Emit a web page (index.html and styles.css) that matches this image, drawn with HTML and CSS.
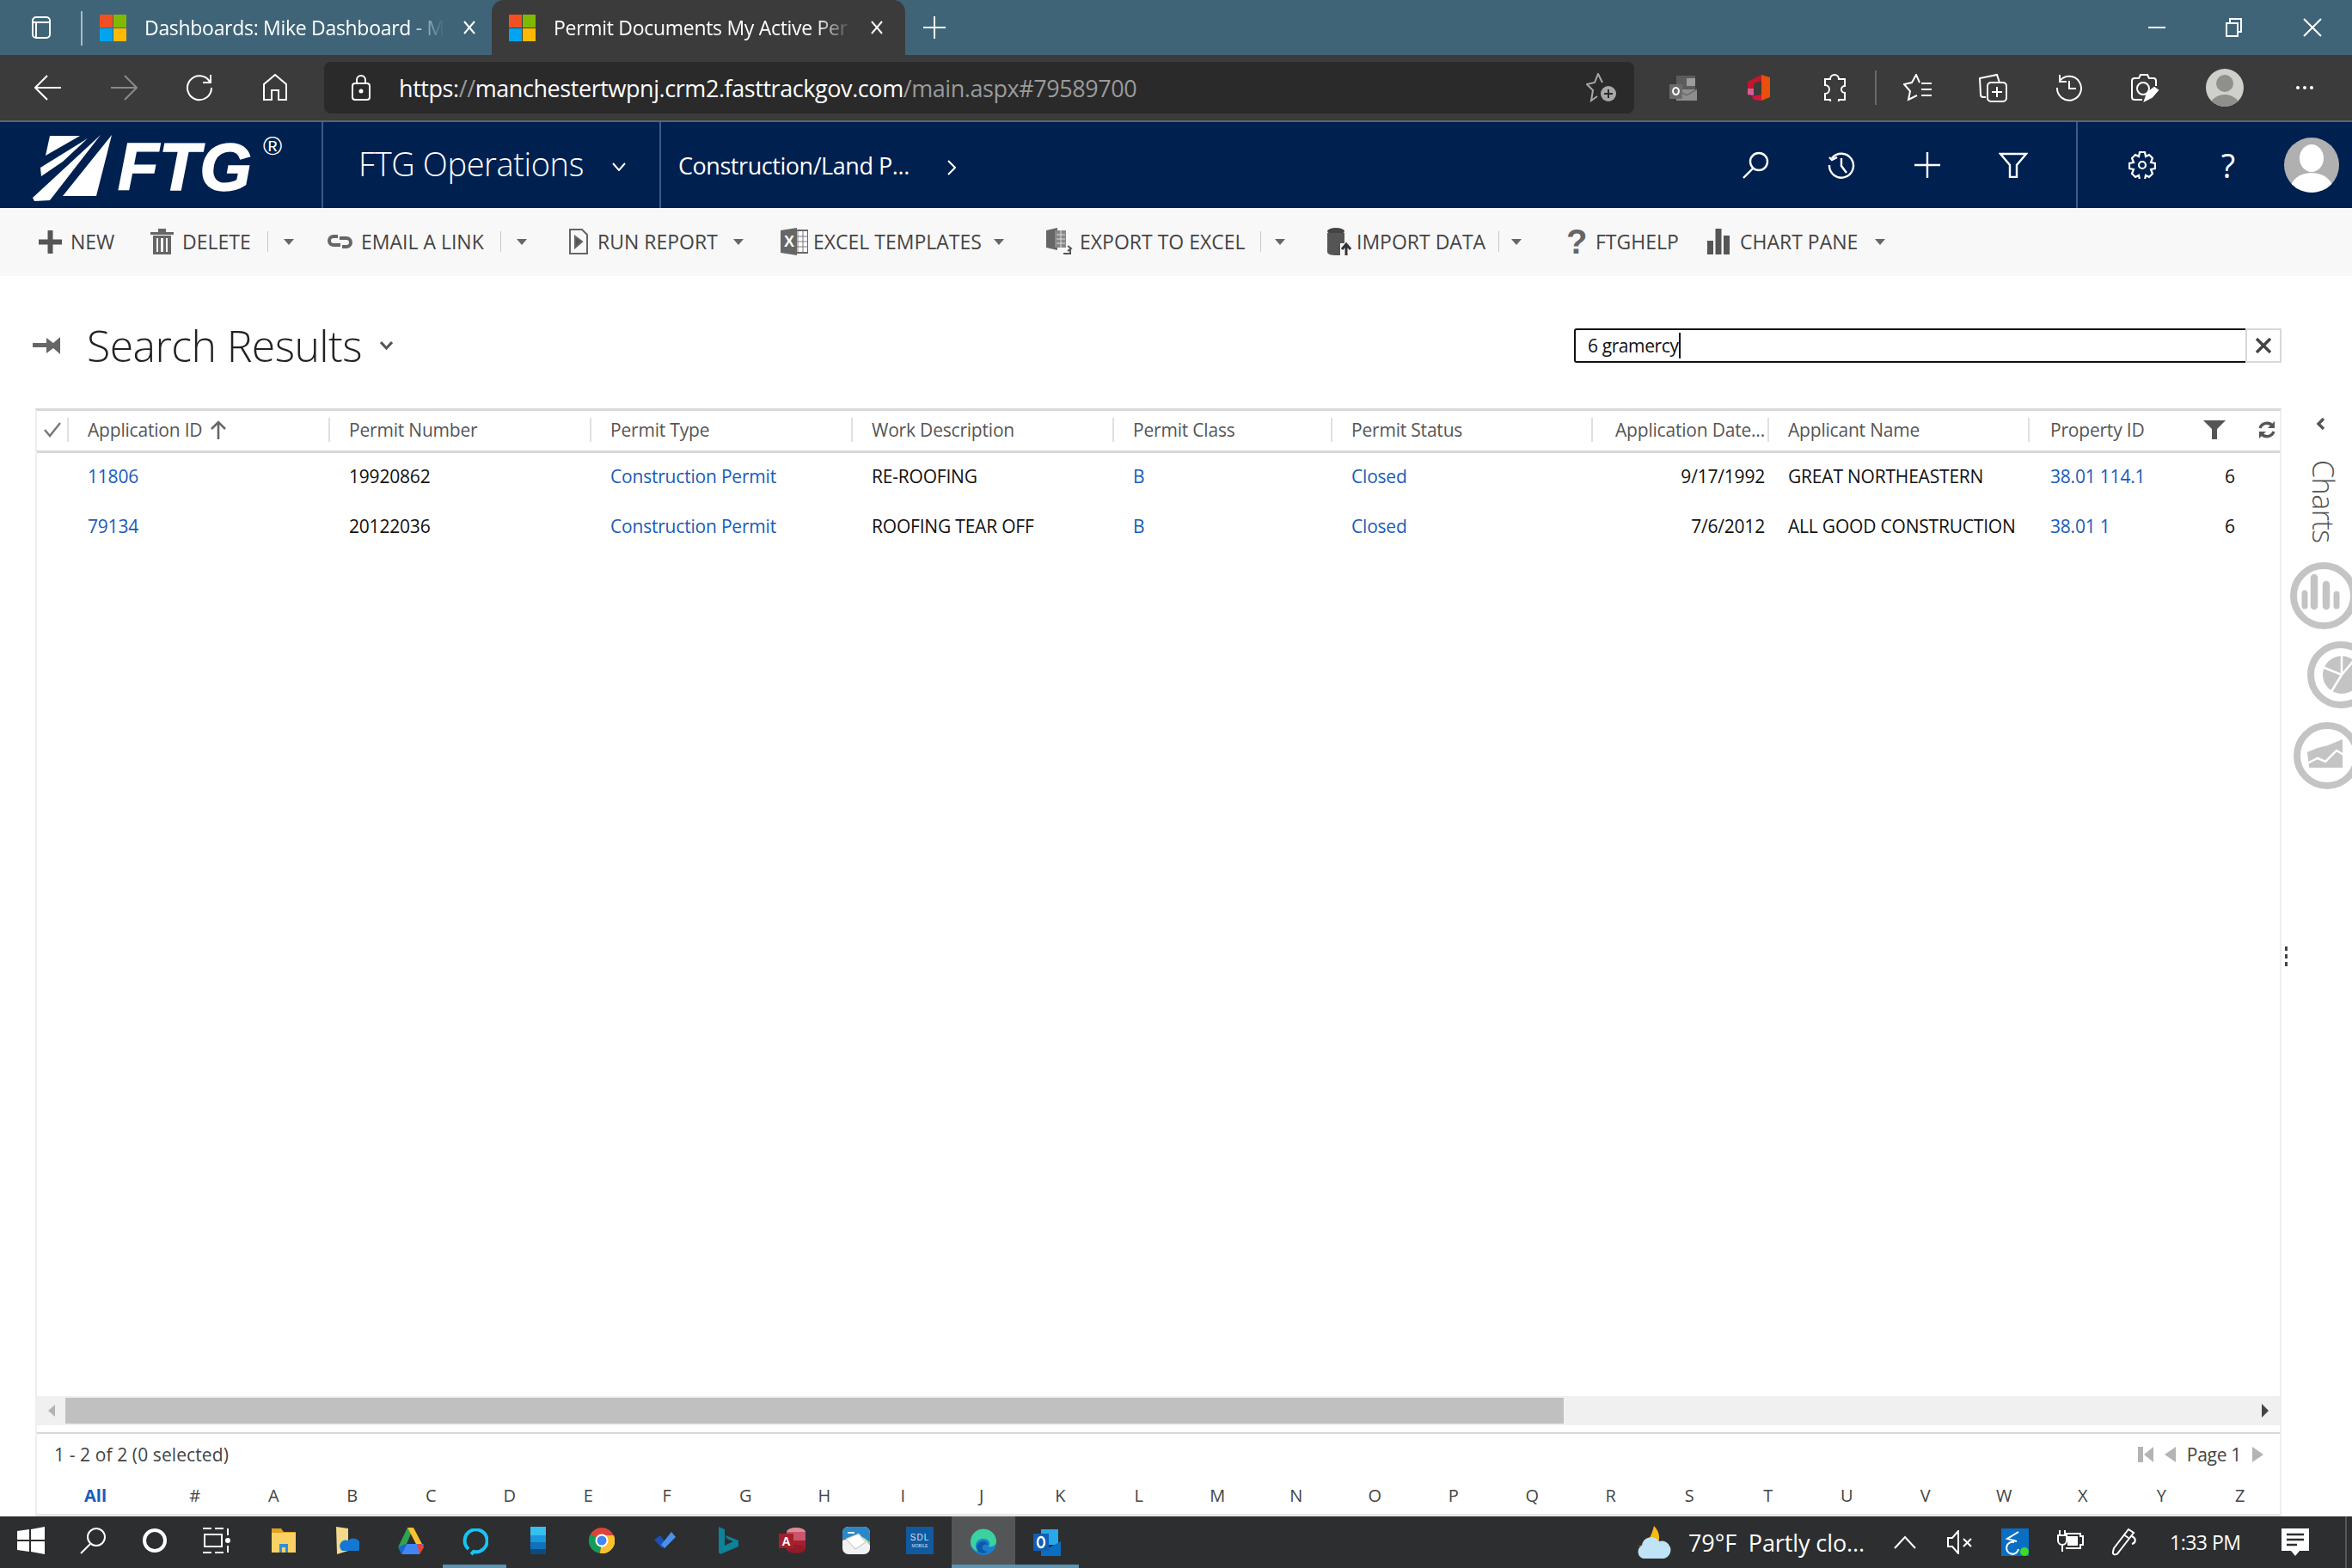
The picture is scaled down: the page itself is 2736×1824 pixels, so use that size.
FILE: index.html
```html
<!DOCTYPE html>
<html>
<head>
<meta charset="UTF-8">
<title>Permit Documents My Active Permits</title>
<link rel="stylesheet" href="styles.css">
</head>
<body>
<div class="screen">

<!-- browser tabs -->
<div class="tabbar">
  <div class="tabside"><svg width="24" height="28" viewBox="0 0 24 28" fill="none" stroke="#fff" stroke-width="2"><rect x="2" y="2" width="20" height="24" rx="4"/><path d="M2 8h20M6 8v18" /></svg></div>
  <div class="tabsep"></div>
  <div class="tab tab1">
    <svg class="favicon" width="31" height="31" viewBox="0 0 31 31"><rect width="15" height="15" fill="#f25022"/><rect x="16" width="15" height="15" fill="#7fba00"/><rect y="16" width="15" height="15" fill="#00a4ef"/><rect x="16" y="16" width="15" height="15" fill="#ffb900"/></svg>
    <span class="tabtitle">Dashboards: Mike Dashboard - M</span>
    <svg class="tabx" width="16" height="16" viewBox="0 0 16 16" stroke="#fff" stroke-width="2"><path d="M2 1l12 14M14 1L2 15"/></svg>
  </div>
  <div class="tab tab2">
    <svg class="favicon" width="31" height="31" viewBox="0 0 31 31"><rect width="15" height="15" fill="#f25022"/><rect x="16" width="15" height="15" fill="#7fba00"/><rect y="16" width="15" height="15" fill="#00a4ef"/><rect x="16" y="16" width="15" height="15" fill="#ffb900"/></svg>
    <span class="tabtitle">Permit Documents My Active Per</span>
    <svg class="tabx" width="16" height="16" viewBox="0 0 16 16" stroke="#fff" stroke-width="2"><path d="M2 1l12 14M14 1L2 15"/></svg>
  </div>
  <svg class="tabplus" width="26" height="26" viewBox="0 0 26 26" stroke="#fff" stroke-width="2"><path d="M13 0v26M0 13h26"/></svg>
  <div class="winbtns">
    <svg width="20" height="20" viewBox="0 0 20 20" stroke="#fff" stroke-width="2"><path d="M0 10h20"/></svg>
    <svg width="20" height="22" viewBox="0 0 20 22" fill="none" stroke="#fff" stroke-width="2"><rect x="1" y="6" width="13" height="15"/><path d="M5 6V1h13v15h-4"/></svg>
    <svg width="22" height="22" viewBox="0 0 22 22" stroke="#fff" stroke-width="2"><path d="M1 1l20 20M21 1L1 21"/></svg>
  </div>
</div>

<!-- browser toolbar -->
<div class="toolbar">
  <div class="tool"><svg width="32" height="30" viewBox="0 0 32 30" fill="none" stroke="#fff" stroke-width="2"><path d="M31 15H2M15 1L1 15l14 14"/></svg></div>
  <div class="tool"><svg width="32" height="30" viewBox="0 0 32 30" fill="none" stroke="#8a8a8a" stroke-width="2"><path d="M1 15h29M17 1l14 14-14 14"/></svg></div>
  <div class="tool"><svg width="32" height="32" viewBox="0 0 32 32" fill="none" stroke="#fff" stroke-width="2"><path d="M28 9a14 14 0 1 0 2 7M29 1v9h-9"/></svg></div>
  <div class="tool"><svg width="30" height="32" viewBox="0 0 30 32" fill="none" stroke="#fff" stroke-width="2"><path d="M2 30V12L15 1l13 11v18h-9V19h-8v11z"/></svg></div>
  <div class="addr">
    <svg class="lock" width="24" height="30" viewBox="0 0 24 30" fill="none" stroke="#fff" stroke-width="2"><rect x="2" y="10" width="20" height="19" rx="3"/><path d="M7 10V6a5 5 0 0 1 10 0v4"/><circle cx="12" cy="19" r="1.5" fill="#fff"/></svg>
    <span class="url"><span class="url-dim">https:</span><span class="url-dim">//</span><span class="url-host">manchestertwpnj.crm2.fasttrackgov.com</span><span class="url-dim">/main.aspx#79589700</span></span>
    <svg class="staradd" width="36" height="34" viewBox="0 0 36 34"><path d="M19 11L14 1l-4 10-9 2 7 7-2 12 7-5" fill="none" stroke="#a8a8a8" stroke-width="2"/><circle cx="26" cy="24" r="9" fill="#a8a8a8"/><path d="M26 19v10M21 24h10" stroke="#2a2a2a" stroke-width="2"/></svg>
  </div>
  <div class="tool tool-first"><svg width="32" height="29" viewBox="0 0 32 29"><rect x="8" y="0" width="22" height="16" fill="#5c5c5c"/><rect x="20" y="3" width="10" height="9" fill="#9c9c9c"/><path d="M8 16h24v13H8z" fill="#8e8e8e"/><path d="M8 16l12 7 12-7" fill="none" stroke="#6a6a6a" stroke-width="1.500"/><rect x="0" y="10" width="15" height="17" rx="1" fill="#6b6b6b"/><ellipse cx="7.500" cy="18" rx="3.400" ry="4" fill="none" stroke="#fff" stroke-width="2"/></svg></div>
  <div class="tool"><svg width="26" height="30" viewBox="0 0 26 30"><path d="M16 0L26 3V26L16 30z" fill="#e8500b"/><path d="M16 0V7L7 10V24L0 23V8z" fill="#c4162a"/><path d="M0 16H7V24L0 23z" fill="#d85a9a"/><path d="M5 25L16 23V30L7 29z" fill="#d9143f"/></svg></div>
  <div class="tool"><svg width="30" height="32" viewBox="0 0 30 32" fill="none" stroke="#fff" stroke-width="2"><path d="M10 6a5 5 0 0 1 10 0h7v8a4 4 0 0 0 0 8v8h-7a5 5 0 0 1-10 0H4v-7a4 4 0 0 0 0-10V6z"/></svg></div>
  <div class="toolsep"></div>
  <div class="tool"><svg width="34" height="32" viewBox="0 0 34 32" fill="none" stroke="#fff" stroke-width="2"><path d="M19 10L15 1l-5 9-9 2 7 8-2 10 10-5M21 11h12M21 18h12M21 25h12"/></svg></div>
  <div class="tool"><svg width="34" height="34" viewBox="0 0 34 34" fill="none" stroke="#fff" stroke-width="2"><path d="M8 28H5a3 3 0 0 1-3-3L1 6l20-4 3 9"/><rect x="10" y="11" width="22" height="22" rx="4"/><path d="M21 16v12M15 22h12"/></svg></div>
  <div class="tool"><svg width="32" height="32" viewBox="0 0 32 32" fill="none" stroke="#fff" stroke-width="2"><path d="M5 8a14 14 0 1 1-3 8M5 1v8h8M16 8v9h8"/></svg></div>
  <div class="tool"><svg width="34" height="34" viewBox="0 0 34 34" fill="none" stroke="#fff" stroke-width="2"><path d="M14 31H5a3 3 0 0 1-3-3V9a3 3 0 0 1 3-3h5l2-4h8l2 4h5a3 3 0 0 1 3 3v6"/><circle cx="15" cy="18" r="7"/><path d="M17 32l3-9 8-6 4 3-7 8z" fill="#fff"/></svg></div>
  <div class="tool tool-me"><div class="me"><div class="me-head"></div><div class="me-body"></div></div></div>
  <div class="tool tool-dots"><span class="dots"><i></i><i></i><i></i></span></div>
</div>

<!-- application header -->
<div class="appbar">
  <div class="logo">
    <svg width="96" height="80" viewBox="0 0 96 80" fill="#fff"><path d="M21 3h35L16 26z"/><path d="M65 6L10 40l1 10 25-17z"/><path d="M80 2L1 75l2 4 18-1z"/><path d="M93 2L75 73H36z"/></svg>
    <span class="logotext">FTG</span><span class="logoreg">®</span>
  </div>
  <div class="appname">FTG Operations<svg width="16" height="10" viewBox="0 0 16 10" fill="none" stroke="#fff" stroke-width="2"><path d="M1 1l7 8 7-8"/></svg></div>
  <div class="crumb">Construction/Land P...<svg width="10" height="18" viewBox="0 0 10 18" fill="none" stroke="#fff" stroke-width="2"><path d="M1 1l8 8-8 8"/></svg></div>
  <div class="navbtn"><svg width="32" height="32" viewBox="0 0 32 32" fill="none" stroke="#fff" stroke-width="2.400"><circle cx="20" cy="12" r="10"/><path d="M13 20L2 31"/></svg></div>
  <div class="navbtn"><svg width="32" height="32" viewBox="0 0 32 32" fill="none" stroke="#fff" stroke-width="2.400"><path d="M5 8a14 14 0 1 1-3 8M2 7l3 3 6-3M16 8v9l6 8"/></svg></div>
  <div class="navbtn"><svg width="32" height="32" viewBox="0 0 32 32" stroke="#fff" stroke-width="2.400"><path d="M16 1v30M1 16h30"/></svg></div>
  <div class="navbtn"><svg width="34" height="30" viewBox="0 0 34 30" fill="none" stroke="#fff" stroke-width="2.400"><path d="M2 2h30L21 15v14h-8V15z"/></svg></div>
  <div class="navgroup">
    <div class="navbtn"><svg width="32" height="32" viewBox="0 0 32 32" fill="none" stroke="#fff" stroke-width="2.200"><path d="M13 1h6l1 5 4-2 4 4-2 5 5 1v6l-5 1 2 5-4 4-4-2-1 5h-6l-1-5-4 2-4-4 2-5-5-1v-6l5-1-2-5 4-4 4 2z"/><circle cx="16" cy="16" r="4"/></svg></div>
    <div class="navbtn navhelp">?</div>
    <div class="navavatar"><div class="ava"><div class="ava-head"></div><div class="ava-body"></div></div></div>
  </div>
</div>

<!-- command bar -->
<div class="cmdbar">
  <div class="cmd cmd-new">
    <svg width="27" height="27" viewBox="0 0 27 27" stroke="#555" stroke-width="6"><path d="M13.500 0v27M0 13.500h27"/></svg>
    <span>NEW</span>
  </div>
  <div class="cmd cmd-delete">
    <svg width="27" height="30" viewBox="0 0 27 30" fill="#666"><rect x="0" y="4" width="27" height="3"/><rect x="9" y="0" width="9" height="4"/><path d="M3 8h21v22H3zM7 11v16h2V11zM12 11v16h3V11zM18 11v16h2V11z" fill-rule="evenodd"/></svg>
    <span>DELETE</span><i class="cmdsep"></i><b class="caret"></b>
  </div>
  <div class="cmd cmd-email">
    <svg width="29" height="18" viewBox="0 0 29 18" fill="none" stroke="#666" stroke-width="4"><path d="M12 3H7a5 5 0 0 0 0 10h8M17 15h5a5 5 0 0 0 0-10h-8"/></svg>
    <span>EMAIL A LINK</span><i class="cmdsep"></i><b class="caret"></b>
  </div>
  <div class="cmd cmd-run">
    <svg width="24" height="30" viewBox="0 0 24 30" fill="none" stroke="#666" stroke-width="2"><path d="M2 1h14l6 6v22H2z"/><path d="M8 9l8 6-8 7z" fill="#555"/></svg>
    <span>RUN REPORT</span><b class="caret"></b>
  </div>
  <div class="cmd cmd-excel">
    <svg width="32" height="32" viewBox="0 0 32 32"><rect x="14" y="3" width="18" height="26" fill="#fff" stroke="#666" stroke-width="2"/><path d="M20 3v26M26 3v26M14 10h18M14 16h18M14 22h18" stroke="#777"/><path d="M0 3l19-3v32L0 29z" fill="#666"/><text x="4" y="22" class="xmark">X</text></svg>
    <span>EXCEL TEMPLATES</span><b class="caret"></b>
  </div>
  <div class="cmd cmd-export">
    <svg width="31" height="32" viewBox="0 0 31 32"><path d="M0 3l13-3v26L0 23z" fill="#666"/><rect x="10" y="3" width="13" height="20" fill="#888"/><path d="M12 8h10M12 13h10M12 18h10M17 3v20" stroke="#ddd"/><path d="M20 30h8v-6M25 21l4 3-4 3" fill="none" stroke="#555" stroke-width="2"/></svg>
    <span>EXPORT TO EXCEL</span><i class="cmdsep"></i><b class="caret"></b>
  </div>
  <div class="cmd cmd-import">
    <svg width="29" height="32" viewBox="0 0 29 32"><ellipse cx="11" cy="4" rx="10" ry="4" fill="#444"/><path d="M1 6v22c0 3 5 4 10 4h5V6z" fill="#555"/><rect x="16" y="6" width="5" height="12" fill="#555"/><path d="M23 32V20M18 25l5-6 5 6" fill="none" stroke="#333" stroke-width="3"/></svg>
    <span>IMPORT DATA</span><i class="cmdsep"></i><b class="caret"></b>
  </div>
  <div class="cmd cmd-help">
    <span class="helpq">?</span>
    <span>FTGHELP</span>
  </div>
  <div class="cmd cmd-chart">
    <svg width="26" height="30" viewBox="0 0 26 30" fill="#555"><rect y="14" width="7" height="16"/><rect x="9.500" width="7" height="30"/><rect x="19" y="8" width="7" height="22"/></svg>
    <span>CHART PANE</span><b class="caret"></b>
  </div>
</div>

<!-- main work area -->
<div class="work">
  <div class="content">
    <div class="titlerow">
      <svg class="pin" width="32" height="20" viewBox="0 0 32 20" fill="#666"><rect y="7" width="17" height="5"/><path d="M16 1l8 6 8-7v20l-8-7-8 6z"/></svg>
      <h1 class="title">Search Results</h1>
      <svg class="titlechev" width="15" height="11" viewBox="0 0 15 11" fill="none" stroke="#555" stroke-width="3"><path d="M1 1l6.500 7L14 1"/></svg>
      <div class="searchbox">
        <div class="searchinput"><span>6 gramercy</span><i class="cursor"></i></div>
        <div class="searchclear"><svg width="18" height="18" viewBox="0 0 18 18" stroke="#444" stroke-width="3.400"><path d="M1 1l16 16M17 1L1 17"/></svg></div>
      </div>
    </div>

    <div class="grid">
      <div class="row head">
        <div class="cell c-check"><svg width="20" height="18" viewBox="0 0 20 18" fill="none" stroke="#777" stroke-width="2.400"><path d="M1 9l6 7L19 1"/></svg></div>
        <div class="cell c-col sep">Application ID<svg class="sortup" width="20" height="22" viewBox="0 0 20 22" fill="none" stroke="#666" stroke-width="2.600"><path d="M10 22V2M2 10l8-8 8 8"/></svg></div>
        <div class="cell c-col sep">Permit Number</div>
        <div class="cell c-col sep">Permit Type</div>
        <div class="cell c-col sep">Work Description</div>
        <div class="cell c-class sep">Permit Class</div>
        <div class="cell c-col2 sep">Permit Status</div>
        <div class="cell c-date sep">Application Date...</div>
        <div class="cell c-col2 sep">Applicant Name</div>
        <div class="cell c-prop sep">Property ID</div>
        <div class="cell c-num"><svg width="26" height="22" viewBox="0 0 26 22" fill="#555"><path d="M0 0h26L16 10v12h-6V10z"/></svg></div>
        <div class="cell c-end"><svg width="22" height="22" viewBox="0 0 22 22" fill="none" stroke="#555" stroke-width="3.400"><path d="M3 9a8.500 8.500 0 0 1 15-2M19 13a8.500 8.500 0 0 1-15 2"/><path d="M20 1v8h-8zM2 21v-8h8z" fill="#555" stroke="none"/></svg></div>
      </div>
      <div class="row data">
        <div class="cell c-check"></div>
        <div class="cell c-col"><a class="lnk">11806</a></div>
        <div class="cell c-col">19920862</div>
        <div class="cell c-col"><a class="lnk">Construction Permit</a></div>
        <div class="cell c-col">RE-ROOFING</div>
        <div class="cell c-class"><a class="lnk">B</a></div>
        <div class="cell c-col2"><a class="lnk">Closed</a></div>
        <div class="cell c-date">9/17/1992</div>
        <div class="cell c-col2">GREAT NORTHEASTERN</div>
        <div class="cell c-prop"><a class="lnk">38.01 114.1</a></div>
        <div class="cell c-num">6</div>
        <div class="cell c-end"></div>
      </div>
      <div class="row data">
        <div class="cell c-check"></div>
        <div class="cell c-col"><a class="lnk">79134</a></div>
        <div class="cell c-col">20122036</div>
        <div class="cell c-col"><a class="lnk">Construction Permit</a></div>
        <div class="cell c-col">ROOFING TEAR OFF</div>
        <div class="cell c-class"><a class="lnk">B</a></div>
        <div class="cell c-col2"><a class="lnk">Closed</a></div>
        <div class="cell c-date">7/6/2012</div>
        <div class="cell c-col2">ALL GOOD CONSTRUCTION</div>
        <div class="cell c-prop"><a class="lnk">38.01 1</a></div>
        <div class="cell c-num">6</div>
        <div class="cell c-end"></div>
      </div>
      <div class="gridfill"></div>
      <div class="hscroll">
        <b class="arr-left"></b>
        <div class="thumb"></div>
        <b class="arr-right"></b>
      </div>
      <div class="status">
        <span>1 - 2 of 2 (0 selected)</span>
        <div class="pager">
          <svg width="18" height="18" viewBox="0 0 18 18" fill="#b4b4b4"><rect width="6" height="18"/><path d="M18 0v18L7 9z"/></svg>
          <svg width="13" height="18" viewBox="0 0 13 18" fill="#b4b4b4"><path d="M13 0v18L0 9z"/></svg>
          <span class="pagenum">Page 1</span>
          <svg width="13" height="18" viewBox="0 0 13 18" fill="#b4b4b4"><path d="M0 0v18l13-9z"/></svg>
        </div>
      </div>
      <div class="alpha">
        <a class="on">All</a><a>#</a><a>A</a><a>B</a><a>C</a><a>D</a><a>E</a><a>F</a><a>G</a><a>H</a><a>I</a><a>J</a><a>K</a><a>L</a><a>M</a><a>N</a><a>O</a><a>P</a><a>Q</a><a>R</a><a>S</a><a>T</a><a>U</a><a>V</a><a>W</a><a>X</a><a>Y</a><a>Z</a>
      </div>
    </div>
  </div>

  <div class="side">
    <svg class="sidechev" width="10" height="14" viewBox="0 0 10 14" fill="none" stroke="#555" stroke-width="3.400"><path d="M8 1L2 7l6 6"/></svg>
    <div class="charts">Charts</div>
    <svg class="ring ring1" width="78" height="78" viewBox="0 0 78 78"><circle cx="39" cy="39" r="35" fill="none" stroke="#c4c4c4" stroke-width="8"/><g stroke="#c4c4c4" stroke-linecap="round" stroke-width="7"><path d="M17 36v15M54 37v14"/><path d="M28 18v33M42 26v25" stroke-width="8.500"/></g></svg>
    <svg class="ring ring2" width="78" height="78" viewBox="0 0 78 78"><circle cx="39" cy="39" r="35" fill="none" stroke="#c4c4c4" stroke-width="8"/><circle cx="40" cy="39" r="22" fill="#c4c4c4"/><path d="M40 39V16M40 39L18 30M40 39L27 60M40 39L56 20" stroke="#fff" stroke-width="2.500"/></svg>
    <svg class="ring ring3" width="78" height="78" viewBox="0 0 78 78"><circle cx="39" cy="39" r="35" fill="none" stroke="#c4c4c4" stroke-width="8"/><path d="M16 35l12-5 12-3 17-7v33H18z" fill="#c4c4c4"/><path d="M16 48l12-6 9 4 13-13 8 5" fill="none" stroke="#fff" stroke-width="2.500"/></svg>
  </div>
  <div class="splitdots"><i></i><i></i><i></i></div>
</div>

<!-- windows taskbar -->
<div class="taskbar">
  <div class="apps">
    <div class="tb"><svg width="32" height="32" viewBox="0 0 32 32" fill="#fff"><path d="M0 5l14-2v12H0zM16 3l16-3v15H16zM0 17h14v12L0 27zM16 17h16v15l-16-3z"/></svg></div>
    <div class="tb"><svg width="32" height="32" viewBox="0 0 32 32" fill="none" stroke="#fff" stroke-width="2"><circle cx="20" cy="12" r="10"/><path d="M13 20L2 31"/></svg></div>
    <div class="tb"><svg width="30" height="30" viewBox="0 0 30 30" fill="none" stroke="#fff" stroke-width="4"><circle cx="15" cy="15" r="12"/></svg></div>
    <div class="tb"><svg width="32" height="32" viewBox="0 0 32 32" fill="none" stroke="#fff" stroke-width="2"><path d="M0 2h10M14 2h10M0 30h10M14 30h10"/><rect x="2" y="9" width="20" height="14"/><path d="M29 2v8M29 22v8"/><circle cx="29" cy="16" r="2" fill="#fff"/></svg></div>
    <div class="tb tb-gap"><svg width="30" height="28" viewBox="0 0 30 28"><path d="M1 0h11l3 4h14v6H1z" fill="#e0a020"/><rect x="1" y="5" width="28" height="23" fill="#fad165"/><path d="M10 28V18h10v10h-3v-6h-4v6z" fill="#2f8fd8"/></svg></div>
    <div class="tb"><svg width="28" height="32" viewBox="0 0 28 32"><path d="M1 0l14 2v26L2 32z" fill="#f3d98b"/><path d="M8 28a7 7 0 0 1 7-12 8 8 0 0 1 12 12z" fill="#1278d4"/></svg></div>
    <div class="tb"><svg width="32" height="32" viewBox="0 0 32 32"><path d="M11 20L19 1h-7L1 24z" fill="#2da44e"/><path d="M19 1l12 23h-7L12 1z" fill="#fbc02d"/><path d="M5 32l6-12h20l-5 12z" fill="#4285f4"/><path d="M1 24l4 8 6-12z" fill="#1967d2"/><path d="M26 32l5-8-3-4h-5z" fill="#ea4335"/></svg></div>
    <div class="tb on"><svg width="32" height="32" viewBox="0 0 32 32" fill="none" stroke="#15c5f5" stroke-width="4"><path d="M12 30l3-3a13 13 0 1 0-6-3"/></svg></div>
    <div class="tb"><svg width="18" height="32" viewBox="0 0 18 32"><rect width="18" height="10" fill="#35c0f0"/><rect y="10" width="18" height="8" fill="#1a96dc"/><rect y="18" width="18" height="8" fill="#0f72bb"/><rect y="26" width="18" height="6" fill="#0a4c80"/></svg></div>
    <div class="tb"><svg width="30" height="30" viewBox="0 0 30 30"><circle cx="15" cy="15" r="15" fill="#db4437"/><path d="M15 15L2 7.500A15 15 0 0 0 13 30z" fill="#0f9d58"/><path d="M15 15l-2 15A15 15 0 0 0 29 9H15z" fill="#fbc02d"/><circle cx="15" cy="15" r="7.500" fill="#fff"/><circle cx="15" cy="15" r="5.500" fill="#4285f4"/></svg></div>
    <div class="tb"><svg width="26" height="20" viewBox="0 0 26 20"><path d="M0 9l7-5 6 8-4 7z" fill="#1c4fb0"/><path d="M8 15L20 0l5 6-13 13z" fill="#4a90f0"/></svg></div>
    <div class="tb"><svg width="24" height="32" viewBox="0 0 24 32" fill="#0d8299"><path d="M0 0l7 3v19l10-5-7-3-2-4 15 6v7L2 32l-2-2z"/></svg></div>
    <div class="tb"><svg width="32" height="32" viewBox="0 0 32 32"><ellipse cx="20" cy="6" rx="11" ry="5" fill="#e08a98"/><rect x="9" y="6" width="22" height="10" fill="#c9566a"/><rect x="9" y="16" width="22" height="10" fill="#a8202f"/><ellipse cx="20" cy="26" rx="11" ry="5" fill="#8f1c27"/><rect x="0" y="8" width="17" height="17" fill="#a4202c"/><text x="3.500" y="21.500" class="tbmark">A</text></svg></div>
    <div class="tb"><svg width="32" height="32" viewBox="0 0 32 32"><rect width="32" height="32" rx="7" fill="#f2f2f2"/><path d="M0 7a7 7 0 0 1 7-7h18a7 7 0 0 1 7 7v11L20 10 0 16z" fill="#2b88c8"/><path d="M4 14l15-6 8 10-12 8z" fill="#fff" stroke="#bbb"/><path d="M24 12l8 6v4z" fill="#8fcf7f"/><path d="M6 6h8v2H6z" fill="#e8f3e8"/></svg></div>
    <div class="tb"><div class="sdl">SDL<small>MOBILE</small></div></div>
    <div class="tb on tb-sel"><svg width="32" height="32" viewBox="0 0 32 32"><circle cx="16" cy="16" r="15" fill="#1b7fd0"/><path d="M1 16A15 15 0 0 1 31 15c0 5-5 7-9 6 3-4 0-9-6-9-8 0-12 8-6 15-6-2-9-6-9-11z" fill="#3ad29f"/><path d="M10 27c-4-6 0-12 6-12 3 0 5 2 5 4-2-1-5-1-6 2s2 6 6 6c-4 3-8 2-11 0z" fill="#0d5aa8"/></svg></div>
    <div class="tb on on-split"><svg width="32" height="32" viewBox="0 0 32 32"><rect x="9" y="1" width="20" height="18" fill="#28a8ea"/><path d="M9 16l10 6 13-7v17H9z" fill="#0a6ec2"/><rect x="0" y="6" width="18" height="20" fill="#0f5fb5"/><ellipse cx="9" cy="16" rx="4" ry="6" fill="none" stroke="#fff" stroke-width="2.500"/></svg></div>
  </div>
  <div class="tray">
    <svg class="weather" width="44" height="38" viewBox="0 0 44 38"><path d="M24 0c6 6 8 14 4 22L4 24c8-1 16-6 20-24z" fill="#f7b914"/><path d="M12 38a8 8 0 0 1-2-15 11 11 0 0 1 20-5 10 10 0 0 1 6 20z" fill="#bfe3f7"/></svg>
    <span class="wtext">79°F&nbsp; Partly clo...</span>
    <div class="trayitem"><svg width="26" height="16" viewBox="0 0 26 16" fill="none" stroke="#fff" stroke-width="2"><path d="M1 15L13 2l12 13"/></svg></div>
    <div class="trayitem"><svg width="30" height="28" viewBox="0 0 30 28" fill="none" stroke="#fff" stroke-width="2"><path d="M1 9h5l7-8v26l-7-8H1zM19 10l9 9M28 10l-9 9"/></svg></div>
    <div class="trayitem"><svg width="32" height="32" viewBox="0 0 32 32"><rect width="32" height="32" fill="#0a6ec2"/><path d="M20 4L7 12l11 3M15 16a7 7 0 1 0 5 8" fill="none" stroke="#fff" stroke-width="2"/><circle cx="27" cy="27" r="5" fill="#3ddc2c"/></svg></div>
    <div class="trayitem"><svg width="32" height="30" viewBox="0 0 32 30" fill="none" stroke="#fff" stroke-width="2"><path d="M4 1v6M10 1v6M2 7h10v6a5 5 0 0 1-10 0zM7 18v8"/><path d="M11 5h17v3h3v10h-3v4H11"/><rect x="14" y="9" width="10" height="9" fill="#fff"/></svg></div>
    <div class="trayitem"><svg width="32" height="34" viewBox="0 0 32 34" fill="none" stroke="#fff" stroke-width="2"><path d="M3 24L20 2l6 4L9 28c-2 4-8 5-7 0z M20 2M14 8l6 4M24 10c6 3 4 8 0 9"/></svg></div>
    <span class="clock">1:33 PM</span>
    <div class="trayitem notif"><svg width="32" height="32" viewBox="0 0 32 32"><path d="M0 0h32v26H21l-5 6-5-6H0z" fill="#fff"/><path d="M6 7h20M6 13h20M6 19h12" stroke="#2d2e30" stroke-width="2.500"/></svg></div>
    <div class="showdesk"></div>
  </div>
</div>

</div>
</body>
</html>
```

FILE: styles.css
```css
* {
	box-sizing: border-box;
}
html, body {
	margin: 0;
	padding: 0;
}
body {
	font-family: "Open Sans", "Liberation Sans", sans-serif;
	color: #222;
	background: #fff;
}
svg {
	display: block;
	flex-shrink: 0;
}
.screen {
	width: 2736px;
	height: 1824px;
	display: flex;
	flex-direction: column;
	overflow: hidden;
}

/* browser tabs */
.tabbar {
	height: 64px;
	background: #3f6478;
	display: flex;
	align-items: stretch;
	color: #fff;
}
.tabside {
	width: 94px;
	display: flex;
	align-items: center;
	padding-left: 36px;
}
.tabsep {
	width: 2px;
	height: 40px;
	margin-top: 13px;
	background: #a9bcc7;
}
.tab {
	display: flex;
	align-items: center;
	gap: 21px;
	padding: 0 25px 0 20px;
	font-size: 23px;
	letter-spacing: -0.3px;
}
.tab1 {
	width: 476px;
}
.tab2 {
	width: 481px;
	background: #3b3b3b;
	border-radius: 14px 14px 0 0;
}
.tabtitle {
	flex: 1;
	white-space: nowrap;
	-webkit-mask-image: linear-gradient(to right, #000 88%, transparent 100%);
	mask-image: linear-gradient(to right, #000 88%, transparent 100%);
}
.tabplus {
	align-self: center;
	margin-left: 21px;
}
.winbtns {
	margin-left: auto;
	display: flex;
	align-items: center;
	gap: 70px;
	padding-right: 35px;
}

/* browser toolbar */
.toolbar {
	height: 78px;
	background: #3b3b3b;
	border-bottom: 2px solid #5e6468;
	display: flex;
	align-items: center;
	padding-left: 12px;
	padding-bottom: 4px;
	padding-top: 4px;
}
.tool {
	width: 88px;
	height: 60px;
	display: flex;
	align-items: center;
	justify-content: center;
	flex-shrink: 0;
}
.tool-me {
	margin-left: 5px;
}
.tool-dots {
	margin-left: 5px;
}
.addr {
	width: 1524px;
	height: 60px;
	margin: 0 13px;
	background: #2a2a2a;
	border-radius: 8px;
	display: flex;
	align-items: center;
	padding-left: 31px;
	padding-right: 20px;
}
.url {
	margin-left: 32px;
	font-size: 27px;
	letter-spacing: -0.43px;
	white-space: nowrap;
	color: #fff;
}
.url-dim {
	color: #9a9a9a;
}
.url-dim:first-child {
	color: #fff;
}
.url-host {
	color: #fff;
}
.staradd {
	margin-left: auto;
}
.toolsep {
	width: 2px;
	height: 40px;
	background: #6a6a6a;
	margin: 0 4px 0 3px;
}
.me {
	width: 44px;
	height: 44px;
	border-radius: 50%;
	background: #cfcfcb;
	overflow: hidden;
	display: flex;
	flex-direction: column;
	align-items: center;
}
.me-head {
	width: 20px;
	height: 20px;
	border-radius: 50%;
	background: #8f8f8b;
	margin-top: 7px;
	flex-shrink: 0;
}
.me-body {
	width: 36px;
	height: 30px;
	border-radius: 50%;
	background: #8f8f8b;
	margin-top: 3px;
	flex-shrink: 0;
}
.dots {
	display: flex;
	gap: 4px;
}
.dots i {
	width: 4px;
	height: 4px;
	border-radius: 50%;
	background: #fff;
}

/* application header */
.appbar {
	height: 100px;
	background: #002050;
	display: flex;
	align-items: stretch;
	color: #fff;
}
.logo {
	width: 376px;
	border-right: 2px solid #3a5a8a;
	display: flex;
	align-items: flex-start;
	padding: 13px 0 0 37px;
}
.logotext {
	font-family: "Liberation Sans", sans-serif;
	font-weight: 700;
	font-style: italic;
	font-size: 78px;
	line-height: 78px;
	margin-top: 0;
	margin-left: 4px;
	-webkit-text-stroke: 1.5px #fff;
}
.logoreg {
	font-family: "Liberation Sans", sans-serif;
	font-size: 30px;
	line-height: 30px;
	margin-left: 13px;
	margin-top: 0;
}
.appname {
	width: 393px;
	border-right: 2px solid #3a5a8a;
	display: flex;
	align-items: center;
	padding-left: 41px;
	font-size: 38px;
	font-weight: 300;
	letter-spacing: -0.4px;
	padding-bottom: 4px;
}
.appname svg {
	margin: 8px 0 0 33px;
}
.crumb {
	flex: 1;
	display: flex;
	align-items: center;
	padding-left: 20px;
	font-size: 27px;
	letter-spacing: -0.45px;
}
.crumb svg {
	margin: 5px 0 0 44px;
}
.navbtn {
	width: 100px;
	display: flex;
	align-items: center;
	justify-content: center;
}
.navgroup {
	display: flex;
	margin-left: 23px;
	padding-left: 25px;
	border-left: 2px solid #3a5a8a;
}
.navhelp {
	font-size: 38px;
	font-weight: 400;
}
.navavatar {
	width: 94px;
	display: flex;
	align-items: center;
	justify-content: center;
}
.ava {
	width: 64px;
	height: 64px;
	border-radius: 50%;
	background: #b0b0b0;
	overflow: hidden;
	display: flex;
	flex-direction: column;
	align-items: center;
}
.ava-head {
	width: 28px;
	height: 32px;
	border-radius: 50%;
	background: #fff;
	margin-top: 8px;
	flex-shrink: 0;
}
.ava-body {
	width: 50px;
	height: 40px;
	border-radius: 50%;
	background: #fff;
	margin-top: 1px;
	flex-shrink: 0;
}

/* command bar */
.cmdbar {
	height: 79px;
	background: #f8f8f8;
	display: flex;
	align-items: center;
	padding: 0 0 1px 45px;
	font-size: 23px;
	color: #444;
}
.cmd {
	display: flex;
	align-items: center;
	gap: 10px;
	flex-shrink: 0;
	white-space: nowrap;
}
.cmd-new { width: 130px; }
.cmd-delete { width: 206px; }
.cmd-email { width: 280px; }
.cmd-run { width: 247px; }
.cmd-excel { width: 309px; gap: 6px; }
.cmd-export { width: 326px; gap: 8px; }
.cmd-import { width: 279px; gap: 6px; }
.cmd-help { width: 164px; gap: 13px; }
.cmd-chart { width: 200px; gap: 12px; }
.cmdsep {
	width: 1px;
	height: 24px;
	background: #c8c8c8;
	margin-left: 9px;
}
.caret {
	width: 0;
	height: 0;
	border-left: 6px solid transparent;
	border-right: 6px solid transparent;
	border-top: 7px solid #666;
	margin-left: 8px;
}
.xmark {
	font-family: "Liberation Sans", sans-serif;
	font-size: 18px;
	font-weight: 700;
	fill: #fff;
}
.helpq {
	font-family: "Liberation Sans", sans-serif;
	font-weight: 700;
	font-size: 40px;
	line-height: 30px;
	color: #666;
	width: 21px;
}

/* work area */
.work {
	flex: 1;
	min-height: 0;
	display: flex;
	position: relative;
	overflow: hidden;
}
.content {
	width: 2654px;
	padding-left: 38px;
	display: flex;
	flex-direction: column;
	flex-shrink: 0;
}
.titlerow {
	height: 154px;
	display: flex;
	align-items: center;
	padding-top: 8px;
}
.title {
	margin: 0 0 0 31px;
	font-size: 50px;
	font-weight: 300;
	letter-spacing: -0.6px;
	color: #222;
}
.titlechev {
	margin-left: 21px;
}
.searchbox {
	margin-left: auto;
	display: flex;
	height: 40px;
}
.searchinput {
	width: 781px;
	border: 2px solid #111;
	border-right: none;
	border-radius: 3px 0 0 3px;
	display: flex;
	align-items: center;
	padding-left: 14px;
	font-size: 21px;
	letter-spacing: -0.4px;
	color: #111;
}
.cursor {
	width: 2px;
	height: 30px;
	background: #111;
}
.searchclear {
	width: 42px;
	border: 2px solid #d8d8d8;
	display: flex;
	align-items: center;
	justify-content: center;
}

/* data grid */
.grid {
	flex: 1;
	min-height: 0;
	margin-left: 3px;
	border-left: 2px solid #eee;
	border-right: 2px solid #eee;
	border-top: 3px solid #d8d8d8;
	border-bottom: 3px solid #e8e8e8;
	display: flex;
	flex-direction: column;
}
.row {
	display: flex;
	align-items: center;
	flex-shrink: 0;
}
.head {
	height: 49px;
	border-bottom: 3px solid #d8d8d8;
	color: #555;
	font-size: 21px;
	letter-spacing: -0.2px;
	padding-bottom: 2px;
}
.data {
	height: 58px;
	font-size: 21px;
	letter-spacing: -0.2px;
	color: #111;
	position: relative;
	top: -2px;
}
.cell {
	display: flex;
	align-items: center;
	white-space: nowrap;
	padding-left: 22px;
	height: 28px;
	flex-shrink: 0;
}
.head .sep {
	border-left: 2px solid #e0e0e0;
}
.data .cell {
	border-left: 2px solid transparent;
}
.c-check { width: 35px; padding-left: 0; justify-content: center; border-left: none !important; }
.c-col { width: 304px; }
.c-class { width: 254px; }
.c-col2 { width: 303px; }
.c-date { width: 205px; justify-content: flex-end; padding-left: 0; padding-right: 3px; }
.c-prop { width: 180px; padding-left: 24px; }
.c-num { width: 74px; padding-left: 0; justify-content: center; }
.data .c-num { justify-content: flex-start; padding-left: 47px; }
.c-end { width: 39px; padding-left: 8px; justify-content: center; }
.sortup {
	margin-left: 9px;
}
.lnk {
	color: #1a5cb8;
}
.gridfill {
	flex: 1;
}
.hscroll {
	height: 34px;
	background: #f0f0f0;
	display: flex;
	align-items: center;
	margin-bottom: 8px;
	flex-shrink: 0;
}
.arr-left {
	width: 0;
	height: 0;
	border-top: 7px solid transparent;
	border-bottom: 7px solid transparent;
	border-right: 8px solid #b4b4b4;
	margin-left: 13px;
}
.thumb {
	width: 1743px;
	height: 30px;
	background: #c0c0c0;
	margin-left: 12px;
}
.arr-right {
	width: 0;
	height: 0;
	border-top: 8px solid transparent;
	border-bottom: 8px solid transparent;
	border-left: 8px solid #444;
	margin-left: auto;
	margin-right: 13px;
}
.status {
	height: 51px;
	border-top: 2px solid #d8d8d8;
	display: flex;
	align-items: center;
	justify-content: space-between;
	padding: 0 19px 2px 20px;
	font-size: 21px;
	letter-spacing: 0.1px;
	color: #444;
	flex-shrink: 0;
}
.pager {
	display: flex;
	align-items: center;
	gap: 13px;
}
.pagenum {
	letter-spacing: -0.3px;
}
.alpha {
	display: grid;
	grid-template-columns: 115px repeat(27, 91.5px);
	padding-left: 23px;
	height: 44px;
	align-items: center;
	justify-items: center;
	font-size: 20px;
	color: #444;
	flex-shrink: 0;
}
.alpha .on {
	color: #1a5cb8;
	font-weight: 700;
	justify-self: start;
	margin-left: 32px;
}

/* charts pane */
.side {
	flex: 1;
	overflow: hidden;
	display: flex;
	flex-direction: column;
	align-items: flex-start;
	padding-top: 165px;
}
.sidechev {
	margin: 0 0 0 41px;
}
.charts {
	writing-mode: vertical-rl;
	font-size: 34px;
	font-weight: 300;
	line-height: 34px;
	color: #555;
	margin: 35px 0 22px 32px;
	letter-spacing: -0.5px;
}
.ring1 { margin-left: 10px; }
.ring2 { margin: 14px 0 0 30px; }
.ring3 { margin: 16px 0 0 14px; }
.splitdots {
	position: absolute;
	left: 2658px;
	top: 780px;
	display: flex;
	flex-direction: column;
	gap: 4px;
}
.splitdots i {
	width: 3px;
	height: 5px;
	background: #444;
}

/* windows taskbar */
.taskbar {
	height: 60px;
	background: #2d2e30;
	display: flex;
	color: #fff;
}
.apps {
	display: flex;
}
.tb {
	width: 72px;
	height: 60px;
	display: flex;
	align-items: center;
	justify-content: center;
	border-bottom: 4px solid transparent;
	flex-shrink: 0;
}
.tb ~ .tb-gap,
.tb-gap ~ .tb {
	width: 74px;
}
.tb-gap {
	margin-left: 5px;
}
.tb.on {
	border-bottom-color: #5b93b3;
	padding-top: 4px;
}
.tb-sel {
	background: #545556;
}
.on-split {
	border-bottom-color: #5b93b3;
}
.tbmark {
	font-family: "Liberation Sans", sans-serif;
	font-size: 14px;
	font-weight: 700;
	fill: #fff;
}
.sdl {
	width: 32px;
	height: 32px;
	background: #0f5aa0;
	color: #cfe0f0;
	font-size: 10px;
	line-height: 11px;
	letter-spacing: 1px;
	text-align: center;
	font-family: "Liberation Sans", sans-serif;
	padding-top: 7px;
}
.sdl small {
	display: block;
	font-size: 5px;
	line-height: 8px;
	letter-spacing: 0;
}
.tray {
	margin-left: auto;
	display: flex;
	align-items: center;
}
.weather {
	margin-right: 20px;
}
.wtext {
	font-size: 27px;
	letter-spacing: -0.1px;
	white-space: nowrap;
	width: 220px;
}
.trayitem {
	width: 64px;
	display: flex;
	align-items: center;
	justify-content: center;
}
.clock {
	font-size: 23px;
	letter-spacing: -0.5px;
	white-space: nowrap;
	width: 114px;
	margin-left: 20px;
}
.notif {
	margin-right: 26px;
}
.showdesk {
	width: 2px;
	height: 60px;
	background: #55565a;
	margin-right: 6px;
}
```
